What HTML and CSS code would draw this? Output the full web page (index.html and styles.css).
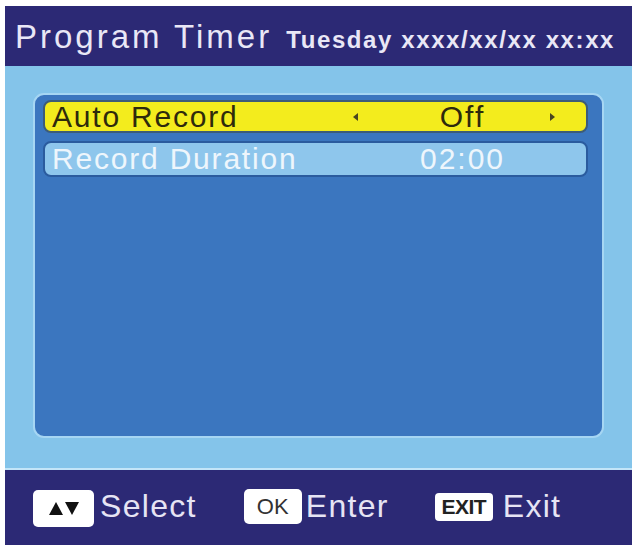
FILE: index.html
```html
<!DOCTYPE html>
<html>
<head>
<meta charset="utf-8">
<link rel="stylesheet" href="styles.css">
</head>
<body>
<div class="screen">
  <div class="header">
    <span class="title">Program Timer</span>
    <span class="date">Tuesday xxxx/xx/xx xx:xx</span>
  </div>
  <div class="body">
    <div class="panel">
      <div class="row active">
        <span class="label">Auto Record</span>
        <span class="opt">
          <span class="arr left"><svg width="5" height="8" viewBox="0 0 5 8"><path d="M5 0 L0 4 L5 8 Z" fill="#4a4620"/></svg></span>
          <span class="val">Off</span>
          <span class="arr right"><svg width="5" height="8" viewBox="0 0 5 8"><path d="M0 0 L5 4 L0 8 Z" fill="#4a4620"/></svg></span>
        </span>
      </div>
      <div class="row">
        <span class="label">Record Duration</span>
        <span class="opt">
          <span class="arr left"></span>
          <span class="val">02:00</span>
          <span class="arr right"></span>
        </span>
      </div>
    </div>
  </div>
  <div class="footer">
    <span class="key key-arrows">
      <svg width="30" height="15" viewBox="0 0 30 15"><path d="M0 14 L7 1 L14 14 Z" fill="#111"/><path d="M16 1 L30 1 L23 14 Z" fill="#111"/></svg>
    </span>
    <span class="hint hint-select">Select</span>
    <span class="key key-ok">OK</span>
    <span class="hint hint-enter">Enter</span>
    <span class="key key-exit">EXIT</span>
    <span class="hint hint-exit">Exit</span>
  </div>
</div>
</body>
</html>
```
FILE: styles.css
```css
html, body {
  margin: 0;
  padding: 0;
  background: #ffffff;
}
body {
  font-family: "Liberation Sans", Arial, sans-serif;
}
.screen {
  margin: 6px 0 0 5px;
  width: 627px;
  height: 539px;
  display: flex;
  flex-direction: column;
}
.header {
  height: 60px;
  background: #2c2975;
  display: flex;
  align-items: baseline;
  padding: 13px 0 0 10px;
  box-sizing: border-box;
  color: #e9e7f6;
}
.title {
  font-size: 33px;
  letter-spacing: 3px;
  line-height: 36px;
}
.date {
  margin-left: 14px;
  font-size: 24px;
  font-weight: bold;
  letter-spacing: 1.6px;
}
.body {
  height: 404px;
  background: #84c4ea;
  padding: 27px 28px 30px 28px;
  box-sizing: border-box;
  border-bottom: 2px solid #c3e5f8;
}
.panel {
  height: 100%;
  box-sizing: border-box;
  background: #3b76bf;
  border: 2px solid #a6d6f3;
  border-radius: 11px;
  padding: 5px 14px 0 8px;
  display: flex;
  flex-direction: column;
  gap: 8px;
}
.row {
  display: flex;
  align-items: center;
  height: 36px;
  box-sizing: border-box;
  border: 2px solid #2a5b9e;
  border-radius: 8px;
  background: #8ec6ec;
  color: #eef6fc;
  font-size: 30px;
  letter-spacing: 2px;
  line-height: 32px;
}
.row.active {
  height: 33px;
  line-height: 29px;
  background: #f3ec1d;
  border-color: #3d5c78;
  color: #2e2a0c;
}
.label {
  width: 288px;
  padding-left: 7px;
  letter-spacing: 1.8px;
}
.opt {
  display: grid;
  grid-template-columns: 40px 165px 40px;
  align-items: center;
}
.arr {
  display: flex;
  align-items: center;
}
.arr.left {
  padding-left: 13px;
}
.arr.right {
  padding-left: 5px;
}
.val {
  text-align: center;
}
.footer {
  flex: 1;
  background: #2c2975;
  display: flex;
  align-items: center;
  padding: 0 0 2px 28px;
  color: #e6e4f4;
}
.key {
  background: #ffffff;
  border-radius: 5px;
  display: flex;
  align-items: center;
  justify-content: center;
  color: #222;
}
.key-arrows {
  width: 61px;
  height: 37px;
  margin-top: 4px;
}
.key-ok {
  width: 58px;
  height: 35px;
  font-size: 22px;
  color: #333;
  margin-left: 47px;
}
.key-exit {
  width: 58px;
  height: 28px;
  font-size: 21px;
  font-weight: bold;
  letter-spacing: -0.5px;
  border-radius: 4px;
  margin-left: 46px;
}
.hint {
  font-size: 32px;
  letter-spacing: 1.3px;
}
.hint-select {
  margin-left: 6px;
}
.hint-enter {
  margin-left: 4px;
}
.hint-exit {
  margin-left: 10px;
}
```
